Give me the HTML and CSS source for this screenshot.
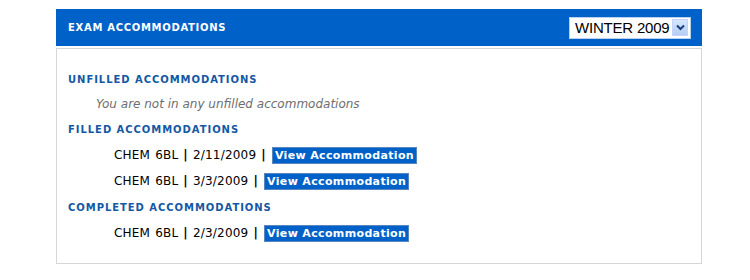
FILE: index.html
```html
<!DOCTYPE html>
<html lang="en">
<head>
<meta charset="UTF-8">
<title>Exam Accommodations</title>
<link rel="stylesheet" href="styles.css">
</head>
<body>
  <div class="panel">
    <div class="panel-header">
      <h1>EXAM ACCOMMODATIONS</h1>
      <div class="term-select">
        <span class="term-value">WINTER 2009</span>
        <span class="term-arrow">
          <svg width="9" height="7" viewBox="0 0 9 7"><path d="M1 1.5 L4.5 5 L8 1.5" fill="none" stroke="#1b3f7a" stroke-width="2"/></svg>
        </span>
      </div>
    </div>

    <div class="panel-body">
      <h2>UNFILLED ACCOMMODATIONS</h2>
      <p class="empty">You are not in any unfilled accommodations</p>

      <h2>FILLED ACCOMMODATIONS</h2>
      <div class="row first">CHEM 6BL <b>|</b> 2/11/2009 <b>|</b> <a href="#" class="btn">View Accommodation</a></div>
      <div class="row">CHEM 6BL <b>|</b> 3/3/2009 <b>|</b> <a href="#" class="btn">View Accommodation</a></div>

      <h2 class="after-rows">COMPLETED ACCOMMODATIONS</h2>
      <div class="row first">CHEM 6BL <b>|</b> 2/3/2009 <b>|</b> <a href="#" class="btn">View Accommodation</a></div>
    </div>
  </div>
</body>
</html>
```

FILE: styles.css
```css
body {
  margin: 0;
  padding: 9px 0 0 56px;
  font-family: "DejaVu Sans", Verdana, sans-serif;
  background-color: #fff;
  color: #000;
}

.panel {
  width: 646px;
}

.panel-header {
  height: 37px;
  background-color: #0062c8;
  display: flex;
  justify-content: space-between;
  align-items: center;
  padding: 0 11px 0 12px;
}
.panel-header h1 {
  margin: 0;
  font-size: 10px;
  font-weight: bold;
  letter-spacing: 0.7px;
  color: #fff;
}

.term-select {
  display: flex;
  align-items: center;
  justify-content: space-between;
  width: 122px;
  height: 22px;
  box-sizing: border-box;
  background-color: #fff;
  border: 1px solid #b9d1f0;
  padding: 0 2px 0 5px;
}
.term-value {
  font-family: "Liberation Sans", Arial, sans-serif;
  font-size: 15px;
  letter-spacing: -0.2px;
  color: #000;
}
.term-arrow {
  width: 16px;
  height: 17px;
  display: flex;
  align-items: center;
  justify-content: center;
  background: linear-gradient(#d6e6fd, #b3cdf5);
  border: 1px solid #c3d3fd;
  box-sizing: border-box;
}

.panel-body {
  margin-top: 2px;
  border: 1px solid #d6d6d6;
  padding: 24px 11px 21px;
  box-shadow: 0 1px 0 #eee;
}
.panel-body h2 {
  margin: 0;
  font-size: 10px;
  font-weight: bold;
  letter-spacing: 0.95px;
  color: #1458a4;
  line-height: 14px;
}
.panel-body h2.after-rows {
  margin-top: 11px;
}
.empty {
  margin: 10px 0 11px 28px;
  font-size: 12px;
  line-height: 15px;
  font-style: italic;
  color: #6e6e6e;
}
.row {
  margin: 8px 0 0 46px;
  height: 18px;
  line-height: 18px;
  font-size: 12px;
  letter-spacing: 0.2px;
  word-spacing: 1px;
}
.row.first {
  margin-top: 9px;
}
.btn {
  display: inline-block;
  vertical-align: top;
  margin-left: 1px;
  padding: 0 2px;
  line-height: 15px;
  margin-top: 1px;
  background-color: #0062c8;
  border: 1px solid #5a86c0;
  color: #fff;
  font-weight: bold;
  font-size: 11px;
  letter-spacing: 0.35px;
  word-spacing: 0;
  text-decoration: none;
}
```
